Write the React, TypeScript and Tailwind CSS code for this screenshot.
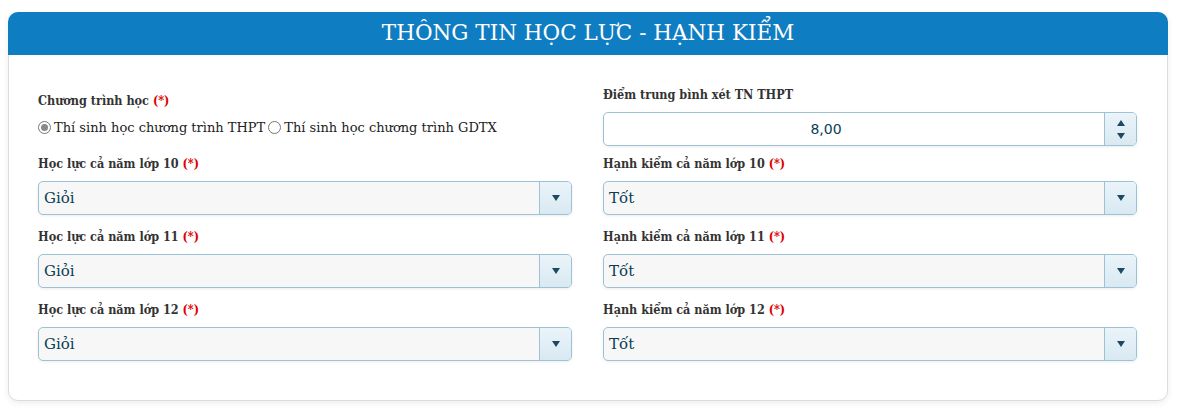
import { memo } from 'react'

type Field = {
    label: string;
    value: string;
};

const serif = "font-['DejaVu_Serif',serif]";
const condensed = "font-['DejaVu_Serif_Condensed','DejaVu_Serif',serif]";

const Required = () => <span className='text-[#e00000]'>(*)</span>;

const FieldLabel: React.FC<{ text: string; required?: boolean }> = ({ text, required }) => (
    <div className={`h-[16px] mb-[9px] text-[12.5px] leading-[16px] font-bold text-[#333] ${condensed}`}>
        {text} {required && <Required />}
    </div>
);

const SelectBox: React.FC<{ value: string }> = ({ value }) => (
    <div className='flex h-[34px] rounded-[5px] border border-[#9cc3d5] bg-[#f7f7f7] shadow-[0_1px_3px_rgba(0,0,0,0.08)] overflow-hidden'>
        <div className={`flex-1 flex items-center pl-[5px] text-[15px] text-[#0a3d56] ${serif}`}>{value}</div>
        <div className='w-[32px] flex items-center justify-center border-l border-[#9cc3d5] bg-gradient-to-b from-[#eaf4f9] to-[#d9e9f2]'>
            <svg width="8" height="6" viewBox="0 0 8 6"><path d="M0 0 L8 0 L4 6 Z" fill="#1b4a62" /></svg>
        </div>
    </div>
);

const RadioDot: React.FC<{ checked?: boolean }> = ({ checked }) => (
    <span className='w-[13px] h-[13px] rounded-full border border-[#767676] bg-white flex items-center justify-center shrink-0'>
        {checked && <span className='w-[7px] h-[7px] rounded-full bg-[#8a8a8a]' />}
    </span>
);

const LEFT: Field[] = [
    { label: 'Học lực cả năm lớp 10', value: 'Giỏi' },
    { label: 'Học lực cả năm lớp 11', value: 'Giỏi' },
    { label: 'Học lực cả năm lớp 12', value: 'Giỏi' },
];

const RIGHT: Field[] = [
    { label: 'Hạnh kiểm cả năm lớp 10', value: 'Tốt' },
    { label: 'Hạnh kiểm cả năm lớp 11', value: 'Tốt' },
    { label: 'Hạnh kiểm cả năm lớp 12', value: 'Tốt' },
];

const App: React.FC = () => {
    return (
        <div className='min-h-screen bg-white pl-[8px] pt-[12px]'>
            <div className='w-[1160px] rounded-[10px] border border-[#dcdcdc] bg-white shadow-[0_2px_6px_rgba(0,0,0,0.08)]'>
                {/* HEADER */}
                <div className={`h-[43px] -mx-px -mt-px flex items-center justify-center rounded-t-[10px] bg-[#0f7dc2] text-white text-[21.5px] ${serif}`}>
                    THÔNG TIN HỌC LỰC - HẠNH KIỂM
                </div>

                {/* BODY */}
                <div className='grid grid-cols-2 gap-x-[31px] pl-[29px] pr-[30px] pt-[32px] pb-[39px]'>
                    {/* LEFT */}
                    <div className='flex flex-col gap-[14px]'>
                        <div className='h-[55px] pt-[6px]'>
                            <FieldLabel text='Chương trình học' required />
                            <div className={`mt-[1px] flex items-center gap-[3px] text-[13px] text-[#222] ${serif}`}>
                                <RadioDot checked />
                                <span>Thí sinh học chương trình THPT</span>
                                <RadioDot />
                                <span>Thí sinh học chương trình GDTX</span>
                            </div>
                        </div>
                        {LEFT.map((f) => (
                            <div key={f.label}>
                                <FieldLabel text={f.label} required />
                                <SelectBox value={f.value} />
                            </div>
                        ))}
                    </div>

                    {/* RIGHT */}
                    <div className='flex flex-col gap-[14px]'>
                        <div className='h-[55px]'>
                            <FieldLabel text='Điểm trung bình xét TN THPT' />
                            <div className='flex h-[34px] rounded-[5px] border border-[#9cc3d5] bg-white shadow-[0_1px_3px_rgba(0,0,0,0.08)] overflow-hidden'>
                                <div className="flex-1 flex items-center justify-center pr-[56px] text-[14px] text-[#0a3d56] font-['DejaVu_Sans',sans-serif]">8,00</div>
                                <div className='w-[32px] flex flex-col items-center justify-center gap-[7px] border-l border-[#9cc3d5] bg-gradient-to-b from-[#eaf4f9] to-[#d9e9f2]'>
                                    <svg width="8" height="6" viewBox="0 0 8 6"><path d="M0 6 L8 6 L4 0 Z" fill="#1b4a62" /></svg>
                                    <svg width="8" height="6" viewBox="0 0 8 6"><path d="M0 0 L8 0 L4 6 Z" fill="#1b4a62" /></svg>
                                </div>
                            </div>
                        </div>
                        {RIGHT.map((f) => (
                            <div key={f.label}>
                                <FieldLabel text={f.label} required />
                                <SelectBox value={f.value} />
                            </div>
                        ))}
                    </div>
                </div>
            </div>
        </div>
    );
};

export default memo(App)
